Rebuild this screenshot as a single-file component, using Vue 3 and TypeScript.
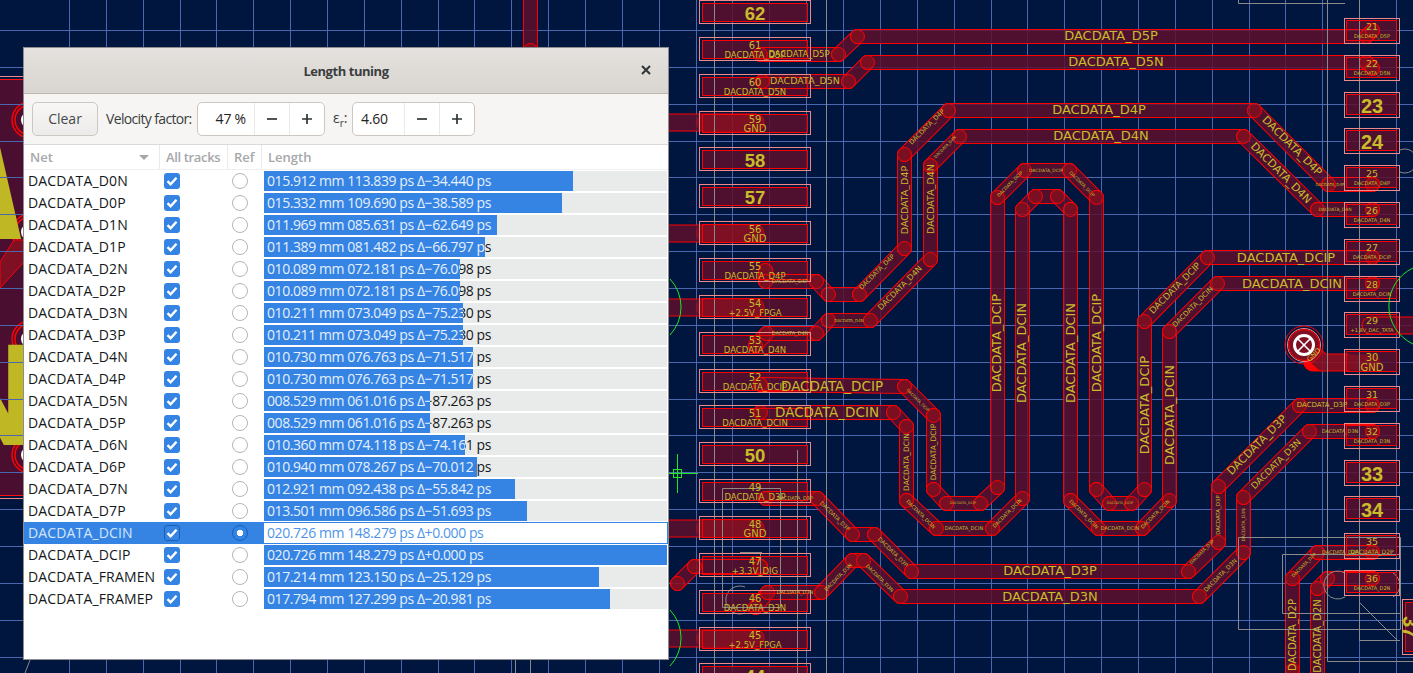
<script setup lang="ts">
type P = [number, number]
interface Label { t: string; x: number; y: number; s: number; r?: number; b?: boolean }

const rows = [
  ['DACDATA_D0N', '015.912', '113.839', '−34.440'],
  ['DACDATA_D0P', '015.332', '109.690', '−38.589'],
  ['DACDATA_D1N', '011.969', '085.631', '−62.649'],
  ['DACDATA_D1P', '011.389', '081.482', '−66.797'],
  ['DACDATA_D2N', '010.089', '072.181', '−76.098'],
  ['DACDATA_D2P', '010.089', '072.181', '−76.098'],
  ['DACDATA_D3N', '010.211', '073.049', '−75.230'],
  ['DACDATA_D3P', '010.211', '073.049', '−75.230'],
  ['DACDATA_D4N', '010.730', '076.763', '−71.517'],
  ['DACDATA_D4P', '010.730', '076.763', '−71.517'],
  ['DACDATA_D5N', '008.529', '061.016', '−87.263'],
  ['DACDATA_D5P', '008.529', '061.016', '−87.263'],
  ['DACDATA_D6N', '010.360', '074.118', '−74.161'],
  ['DACDATA_D6P', '010.940', '078.267', '−70.012'],
  ['DACDATA_D7N', '012.921', '092.438', '−55.842'],
  ['DACDATA_D7P', '013.501', '096.586', '−51.693'],
  ['DACDATA_DCIN', '020.726', '148.279', '+0.000'],
  ['DACDATA_DCIP', '020.726', '148.279', '+0.000'],
  ['DACDATA_FRAMEN', '017.214', '123.150', '−25.129'],
  ['DACDATA_FRAMEP', '017.794', '127.299', '−20.981'],
].map(([name, mm, ps, d]) => ({
  name,
  text: `${mm} mm ${ps} ps Δ${d} ps`,
  width: (parseFloat(ps) / 148.279) * 403,
  selected: name === 'DACDATA_DCIN',
}))

const gridX: number[] = []
for (let i = 0; i < 37; i++) gridX.push(Math.round(69 + i * 36.86) + 0.5)
const gridY: number[] = []
for (let i = 0; i < 19; i++) gridY.push(Math.round(30 + i * 36.86) + 0.5)

const paths: P[][] = [
  [[760, 54], [838, 54], [857, 36], [1366, 36], [1372, 30]],
  [[762, 81], [848, 81], [867, 62], [1366, 62], [1372, 68]],
  [[765, 270], [765, 281], [816, 281], [828, 294], [859, 294], [904, 248], [904, 154], [948, 110], [1254, 110], [1328, 184], [1372, 184]],
  [[755, 345], [766, 333], [816, 333], [828, 320], [870, 320], [930, 259], [930, 165], [959, 136], [1243, 136], [1317, 209], [1372, 209]],
  [[760, 384], [904, 386], [933, 415], [933, 489], [946, 503], [980, 503], [997, 487], [997, 197], [1024, 170], [1069, 170], [1096, 197], [1096, 489], [1109, 503], [1131, 503], [1144, 489], [1144, 321], [1207, 257], [1372, 257]],
  [[760, 412], [893, 412], [906, 426], [906, 500], [936, 528], [992, 528], [1022, 498], [1022, 209], [1035, 196], [1057, 196], [1070, 209], [1070, 500], [1098, 528], [1142, 528], [1169, 500], [1169, 331], [1217, 283], [1372, 283]],
  [[765, 498], [817, 498], [852, 534], [874, 534], [911, 571], [1188, 571], [1218, 542], [1218, 486], [1299, 405], [1372, 405]],
  [[755, 607], [767, 592], [821, 592], [852, 560], [863, 560], [900, 596], [1199, 596], [1243, 552], [1243, 497], [1309, 431], [1372, 431]],
  [[1292, 690], [1292, 670], [1292, 578], [1317, 552], [1372, 552]],
  [[1317, 690], [1317, 588], [1327, 578], [1372, 578]],
  [[677, 583], [694, 566], [760, 566]],
  [[530, -10], [530, 50]],
]

const segs = paths.flatMap((p) => p.slice(1).map((q, i) => [p[i], q] as [P, P]))
const vias = paths.flatMap((p) => p)

const power = [122, 233, 307, 528, 638]
const leftPads = Array.from({ length: 19 }, (_, i) => ({ n: 62 - i, y: Math.round(i * 36.86) }))
const rightPads = Array.from({ length: 16 }, (_, i) => ({ n: 21 + i, y: Math.round(18 + i * 36.8) }))

const leftBig = [62, 58, 57, 50, 44]
const rightBig = [23, 24, 33, 34]
const leftNets: Record<number, string> = {
  61: 'DACDATA_D5P', 60: 'DACDATA_D5N', 59: 'GND', 56: 'GND', 55: 'DACDATA_D4P', 54: '+2.5V_FPGA',
  53: 'DACDATA_D4N', 52: 'DACDATA_DCIP', 51: 'DACDATA_DCIN', 49: 'DACDATA_D3P', 48: 'GND',
  47: '+3.3V_DIG', 46: 'DACDATA_D3N', 45: '+2.5V_FPGA',
}
const rightNets: Record<number, string> = {
  21: 'DACDATA_D5P', 22: 'DACDATA_D5N', 25: 'DACDATA_D4P', 26: 'DACDATA_D4N', 27: 'DACDATA_DCIP',
  28: 'DACDATA_DCIN', 29: '+1.8V_DAC_TATA', 31: 'DACDATA_D3P', 32: 'DACDATA_D3N', 35: 'DACDATA_D2P', 36: 'DACDATA_D2N',
}

const labels: Label[] = []
const bigs: Label[] = []
leftPads.forEach(({ n, y }) => {
  if (leftBig.includes(n)) bigs.push({ t: String(n), x: 755, y: y + 13, s: 18.5 })
  else {
    labels.push({ t: String(n), x: 755, y: y + 8, s: 10 })
    labels.push({ t: leftNets[n] ?? '', x: 755, y: y + 17.5, s: leftNets[n]?.length < 8 ? 10 : 8.5 })
  }
})
rightPads.forEach(({ n, y }) => {
  if (rightBig.includes(n)) bigs.push({ t: String(n), x: 1372, y: y + 13.5, s: 20 })
  else if (n === 30) {
    labels.push({ t: '30', x: 1372, y: y + 8, s: 10 })
    labels.push({ t: 'GND', x: 1372, y: y + 18, s: 10 })
  } else {
    labels.push({ t: String(n), x: 1372, y: y + 8, s: 9.5 })
    labels.push({ t: rightNets[n] ?? '', x: 1372, y: y + 18, s: n === 35 ? 6 : 5 })
  }
})
const L = (t: string, x: number, y: number, s: number, r = 0): Label => ({ t: 'DACDATA_' + t, x, y, s, r })
labels.push(
  L('D5P', 1111, 35.5, 13), L('D5N', 1116, 61.5, 13), L('D4P', 1099, 109.5, 13), L('D4N', 1101, 135.5, 13),
  L('D5P', 799, 54, 8.5), L('D5N', 805, 80, 9.5),
  L('D4P', 1292, 146, 11, 45), L('D4N', 1281, 173, 11, 45),
  L('D4P', 904, 200, 9.5, -90), L('D4N', 930, 199, 9.5, -90),
  L('D4P', 927, 127, 6.5, -45), L('D4N', 945, 147, 4, -45),
  L('D4P', 877, 272, 6.5, -45), L('D4N', 900, 288, 8, -45),
  L('D4P', 790, 281, 5), L('D4N', 849, 320, 4), L('D4N', 790, 333, 5),
  L('DCIP', 832, 386, 13.5), L('DCIN', 827, 412, 13.5),
  L('DCIP', 996.5, 343, 13, -90), L('DCIN', 1021.5, 353, 13, -90), L('DCIN', 1070, 353, 13, -90), L('DCIP', 1096, 343, 13, -90),
  L('DCIP', 1144, 405, 13, -90), L('DCIN', 1169, 415, 13, -90),
  L('DCIN', 906, 462, 7.5, -90), L('DCIP', 933, 452, 7.5, -90),
  L('DCIP', 918, 400, 4, 45), L('DCIP', 1286, 257, 13), L('DCIN', 1292, 283, 13),
  L('DCIP', 1175, 288, 9, -45), L('DCIN', 1193, 307, 7, -45),
  L('D3P', 1050, 570.5, 13), L('D3N', 1050, 596.5, 13), L('D3P', 1257, 445, 11, -45), L('D3N', 1276, 464, 9, -45),
  L('D3P', 1218, 515, 5.5, -90), L('D3N', 1243, 525, 4.5, -90),
  L('D3P', 1202, 552, 4.5, -45), L('D3N', 1220, 575, 6, -45),
  L('D3P', 1322, 405, 7), L('D3N', 1340, 431, 5),
  L('D2P', 1292, 635, 10, -90), L('D2N', 1317, 636, 10, -90),
  L('D2P', 1340, 552, 5), L('D2P', 1304, 565, 4.5, -45),
  L('D3P', 835, 516, 5.5, 45), L('D3P', 893, 552, 5.5, 45), L('D3N', 880, 578, 5, 45), L('D3N', 838, 577, 5, -45),
  L('D3P', 795, 498, 5), L('D3N', 795, 592, 5),
  L('DCIN', 964, 528, 5), L('DCIP', 963, 503, 3.5), L('DCIN', 1120, 528, 5), L('DCIP', 1120, 503, 3.5),
  L('DCIN', 921, 514, 5, 45), L('DCIN', 1007, 513, 5, -45), L('DCIN', 1084, 514, 5, 45), L('DCIN', 1155, 514, 5, -45),
  L('DCIP', 1046, 170, 4.5), L('DCIP', 1010, 184, 4.5, -45), L('DCIP', 1082, 184, 4.5, 45),
  L('D4P', 1330, 184, 4), L('D4N', 1335, 209, 4.5),
  { t: 'GND', x: 1314, y: 355, s: 7, r: -45 },
)
</script>

<template>
  <div class="desk">
    <svg class="pcb" width="1413" height="673" viewBox="0 0 1413 673">
      <rect class="zone" x="-3" y="79" width="40" height="416" />
      <line class="zone-pink" x1="0" y1="76.5" x2="30" y2="76.5" />
      <line class="zone-edge" x1="0" y1="79.5" x2="30" y2="79.5" />
      <line class="zone-edge" x1="0" y1="495.5" x2="30" y2="495.5" />
      <line class="zone-pink" x1="0" y1="498.5" x2="30" y2="498.5" />
      <g v-for="v in [120, 232, 339, 455]" :key="v">
        <circle class="via-ring" cx="30" :cy="v" r="18" />
        <circle class="via-ring" cx="30" :cy="v" r="15" />
        <circle class="via-hole" cx="30" :cy="v" r="9" />
      </g>
      <text class="huge" font-size="300" text-anchor="end" transform="translate(22 239) scale(0.62 1)">A</text>
      <text class="huge" x="-70" y="445" font-size="138">N</text>
      <polygon class="zone-trace" points="0,262 14,240 24,240 24,262 0,288" />

      <line v-for="x in gridX" :key="'gx' + x" class="grid" :x1="x" y1="0" :x2="x" y2="673" />
      <line v-for="y in gridY" :key="'gy' + y" class="grid" x1="0" :y1="y" x2="1413" :y2="y" />

      <g v-for="p in leftPads" :key="'lp' + p.n">
        <rect class="pad-fill" x="702" :y="p.y + 3" width="106" height="19" />
      </g>
      <g v-for="p in rightPads" :key="'rp' + p.n">
        <rect class="pad-fill" x="1346" :y="p.y + 2" width="51" height="21" />
      </g>
      <rect class="pad-fill" x="1405" y="602" width="10" height="50" />

      <g class="snap">
        <g v-for="y in power" :key="'pw' + y">
          <line class="trace-edge thick" x1="660" :y1="y" x2="755" :y2="y" />
          <line class="trace-body thick-in" x1="660" :y1="y" x2="755" :y2="y" />
          <line class="trace-hot thick-in" x1="703" :y1="y" x2="755" :y2="y" />
        </g>
        <line class="trace-edge" x1="702" y1="566" x2="760" y2="566" />
        <line class="trace-edge thick" x1="1312" y1="362" x2="1345" y2="362" />
        <line class="trace-edge thick" x1="1304" y1="345" x2="1322" y2="362" />
        <line class="trace-hot thick-in" x1="1304" y1="345" x2="1322" y2="362" />
        <line class="trace-hot thick-in" x1="1322" y1="362" x2="1372" y2="362" />
        <line class="trace-edge thick" x1="1370" y1="325" x2="1420" y2="325" />
        <line class="trace-body thick-in" x1="1370" y1="325" x2="1420" y2="325" />

        <g v-for="(s, i) in segs" :key="'e' + i">
          <line class="trace-edge" :x1="s[0][0]" :y1="s[0][1]" :x2="s[1][0]" :y2="s[1][1]" />
          <line class="trace-body" :x1="s[0][0]" :y1="s[0][1]" :x2="s[1][0]" :y2="s[1][1]" />
        </g>
        <circle v-for="(v, i) in vias" :key="'v' + i" class="joint" :cx="v[0]" :cy="v[1]" r="7" />
      </g>

      <line v-for="x in gridX" :key="'ox' + x" class="grid-over" :x1="x" y1="0" :x2="x" y2="673" />
      <line v-for="y in gridY" :key="'oy' + y" class="grid-over" x1="0" :y1="y" x2="1413" :y2="y" />

      <g class="outline">
        <path d="M714.5 0V673M826.5 0V673M797.5 450V673M1327.5 0V661.5H1413M1359.5 0V640.5H1400M1359.5 602.5L1397 640" />
        <path d="M1238.5 3.5H1345M1238.5 0V3.5M1238.5 537.5H1400.5V629.5H1238.5ZM1282.5 554.5H1400.5V613.5H1282.5Z" />
        <path d="M722.5 488.5H780.5V607.5H722.5ZM740 552.5H762M760.5 552V577M530.5 660V673M515.5 660V673M30 660L25 673" />
        <path d="M1400 150a12 12 0 1 1 0 22" />
        <path d="M1345 573a14 14 0 1 0 0 24M1393 573a14 14 0 0 1 0 24" />
        <path d="M745 587a14 14 0 1 0 0 26" />
      </g>

      <g v-for="p in leftPads" :key="'lo' + p.n">
        <rect class="pad-outer" x="699.5" :y="p.y + 0.5" width="111" height="23" />
        <rect class="pad-inner" x="702.5" :y="p.y + 3.5" width="105" height="18" />
      </g>
      <g v-for="p in rightPads" :key="'ro' + p.n">
        <rect class="pad-outer" x="1344.5" :y="p.y + 0.5" width="55" height="25" />
        <rect class="pad-inner" x="1346.5" :y="p.y + 2.5" width="50" height="20" />
      </g>
      <rect class="pad-outer" x="1402.5" y="599.5" width="20" height="55" />
      <rect class="pad-inner" x="1405.5" y="602.5" width="20" height="49" />
      <text class="pcb-big" x="1410" y="627" font-size="20" transform="rotate(90 1410 627)">37</text>

      <circle class="drill-ring" cx="1304" cy="345" r="19" />
      <circle class="drill-pink" cx="1304" cy="345" r="16.5" />
      <circle class="drill-fill" cx="1304" cy="345" r="15.5" />
      <circle class="drill-white" cx="1304" cy="345" r="9.5" />
      <path class="drill-cross" d="M1297 352L1311 338M1297 338L1311 352" />

      <path class="green" d="M670 279A41 41 0 0 1 670 335M670 610A41 41 0 0 1 670 666M1413 268A42 42 0 0 0 1413 344" />
      <path class="green" d="M677.5 454V493M664 473.5H698" />
      <rect class="green" x="673.5" y="469.5" width="8" height="8" />

      <text
        v-for="(l, i) in labels"
        :key="'t' + i"
        class="pcb-text"
        :x="l.x"
        :y="l.y"
        :font-size="l.s"
        :transform="l.r ? `rotate(${l.r} ${l.x} ${l.y})` : undefined"
      >{{ l.t }}</text>
      <text v-for="b in bigs" :key="'b' + b.t" class="pcb-big" :x="b.x" :y="b.y" :font-size="b.s">{{ b.t }}</text>
    </svg>

    <section class="dialog">
      <header class="titlebar">
        <h1 class="title">Length tuning</h1>
        <svg class="close" width="12" height="12" viewBox="0 0 12 12">
          <path d="M2 2L10 10M10 2L2 10" />
        </svg>
      </header>

      <div class="toolbar">
        <button class="clear">Clear</button>
        <span class="tool-label velocity">Velocity factor:</span>
        <div class="spin spin-a">
          <span class="spin-value right">47 %</span>
          <span class="spin-btn"><svg width="14" height="14" viewBox="0 0 14 14"><path d="M2 7H12" /></svg></span>
          <span class="spin-btn"><svg width="14" height="14" viewBox="0 0 14 14"><path d="M2 7H12M7 2V12" /></svg></span>
        </div>
        <span class="tool-label eps">ε<sub>r</sub>:</span>
        <div class="spin spin-b">
          <span class="spin-value">4.60</span>
          <span class="spin-btn"><svg width="14" height="14" viewBox="0 0 14 14"><path d="M2 7H12" /></svg></span>
          <span class="spin-btn"><svg width="14" height="14" viewBox="0 0 14 14"><path d="M2 7H12M7 2V12" /></svg></span>
        </div>
      </div>

      <div class="table">
        <div class="head">
          <div class="hcell net-head">Net<i class="sort" /></div>
          <div class="hcell tight">All tracks</div>
          <div class="hcell">Ref</div>
          <div class="hcell last">Length</div>
        </div>
        <div v-for="r in rows" :key="r.name" class="row" :class="{ selected: r.selected }">
          <div class="name">{{ r.name }}</div>
          <div class="mid">
            <span class="check">
              <svg width="12" height="12" viewBox="0 0 12 12"><path d="M1.5 6.2L4.6 9.2L10.5 2.8" /></svg>
            </span>
          </div>
          <div class="mid"><span class="radio" /></div>
          <div class="bar">
            <span class="bar-text">{{ r.text }}</span>
            <span class="fill" :style="{ width: r.width + 'px' }"><span class="bar-text">{{ r.text }}</span></span>
          </div>
        </div>
      </div>
    </section>
  </div>
</template>

<style scoped>
.desk {
  position: relative;
  width: 1413px;
  height: 673px;
  overflow: hidden;
  background: #00163f;
  font-family: "Open Sans", "Noto Sans", sans-serif;
}
.pcb { position: absolute; inset: 0; display: block; }
.snap { transform: translate(0.5px, 0.5px); }
.zone { fill: #4a0f30; }
.zone-edge { stroke: #ff1010; stroke-width: 1; }
.zone-pink { stroke: #f08888; stroke-width: 1; }
.zone-trace { fill: #7f0f22; stroke: #ff0000; stroke-width: 1; }
.via-ring { fill: none; stroke: #ff0000; stroke-width: 1.5; }
.via-hole { fill: #fff; }
.huge { fill: #c0b724; font-family: "DejaVu Sans", sans-serif; font-weight: 700; }
.grid { stroke: #3f66ad; stroke-width: 1; }
.grid-over { stroke: #a070c0; stroke-width: 1; opacity: 0.12; }
.pad-fill { fill: #4f1030; }
.pad-outer { fill: none; stroke: #f08888; stroke-width: 1; }
.pad-inner { fill: none; stroke: #ff0000; stroke-width: 1; }
.trace-edge { stroke: #ff0000; stroke-width: 15; stroke-linecap: round; }
.trace-body { stroke: #4f1030; stroke-width: 13; stroke-linecap: round; }
.thick { stroke-width: 18; }
.thick-in { stroke-width: 16; }
.trace-hot { stroke: #7f0f22; stroke-linecap: round; }
.joint { fill: #7a0f22; stroke: #ff0000; stroke-width: 1; }
.outline { fill: none; stroke: #8a8a8a; stroke-width: 1; }
.outline path { fill: none; }
.drill-ring { fill: none; stroke: #ff0000; stroke-width: 1; }
.drill-pink { fill: none; stroke: #f08888; stroke-width: 1; }
.drill-fill { fill: #7f0f22; stroke: #ff0000; stroke-width: 1; }
.drill-white { fill: #7f0f22; stroke: #fff; stroke-width: 3; }
.drill-cross { stroke: #fff; stroke-width: 1.6; fill: none; }
.green { fill: none; stroke: #22e422; stroke-width: 1; }
.pcb-text {
  fill: #c8bc2a;
  font-family: "DejaVu Sans", sans-serif;
  text-anchor: middle;
  dominant-baseline: central;
}
.pcb-big {
  fill: #c8bc2a;
  font-family: "Liberation Sans", sans-serif;
  font-weight: 700;
  text-anchor: middle;
  dominant-baseline: central;
}

.dialog {
  position: absolute;
  left: 23px;
  top: 47px;
  width: 646px;
  height: 613px;
  box-sizing: border-box;
  border: 1px solid #8d8d8d;
  background: #fff;
  display: flex;
  flex-direction: column;
  color: #2e3436;
}
.titlebar {
  height: 46px;
  flex: none;
  box-sizing: border-box;
  border-bottom: 1px solid #bfb8b1;
  background: linear-gradient(#e4e1de, #d9d6d1);
  display: flex;
  align-items: center;
  justify-content: center;
  position: relative;
}
.title { margin: 0; font-size: 13px; font-weight: 700; color: #3b3d3f; letter-spacing: -0.45px; }
.close { position: absolute; right: 16px; top: 16px; }
.close path { stroke: #2e3436; stroke-width: 2; fill: none; }
.toolbar {
  height: 51px;
  flex: none;
  box-sizing: border-box;
  background: #f6f5f4;
  border-bottom: 1px solid #dcd9d6;
  display: flex;
  align-items: center;
  padding: 0 0 1px 8px;
  font-size: 14px;
}
.clear {
  width: 66px;
  height: 34px;
  box-sizing: border-box;
  border: 1px solid #cdc7c2;
  border-radius: 5px;
  background: linear-gradient(#f8f7f6, #ecebe9);
  color: #45494b;
  font: inherit;
  padding: 0;
}
.tool-label { margin-left: 8px; color: #3a3e40; white-space: nowrap; }
.velocity { width: 86px; letter-spacing: -0.65px; }
.eps { margin-left: 8px; width: 19px; margin-right: 0; }
.eps sub { font-size: 10px; }
.spin {
  height: 34px;
  box-sizing: border-box;
  margin-left: 5px;
  border: 1px solid #cdc7c2;
  border-radius: 5px;
  background: #fff;
  display: flex;
  align-items: stretch;
}
.spin-a { width: 128px; }
.spin-b { width: 123px; margin-left: 0; }
.spin-value { flex: 1; align-self: center; padding: 0 8px; color: #1f2325; letter-spacing: -0.2px; }
.spin-value.right { text-align: right; }
.spin-btn {
  width: 35px;
  flex: none;
  box-sizing: border-box;
  border-left: 1px solid #ebe9e6;
  display: flex;
  align-items: center;
  justify-content: center;
}
.spin-btn path { stroke: #2e3436; stroke-width: 1.7; fill: none; }
.table { flex: 1; font-size: 14px; }
.head {
  height: 25px;
  box-sizing: border-box;
  display: grid;
  grid-template-columns: 136px 68px 34px 1fr;
  border-bottom: 1px solid #f1f0ee;
  font-size: 13px;
  font-weight: 600;
  color: #a5a8aa;
}
.hcell {
  display: flex;
  align-items: center;
  padding-left: 6px;
  box-sizing: border-box;
  border-right: 1px solid #ece9e6;
  white-space: nowrap;
}
.hcell.tight { letter-spacing: -0.35px; }
.hcell.last { border-right: 0; }
.net-head { position: relative; }
.sort {
  position: absolute;
  right: 10px;
  top: 10px;
  border: 5px solid transparent;
  border-top: 5px solid #a5a8aa;
  border-bottom: 0;
}
.row {
  height: 22px;
  display: grid;
  grid-template-columns: 136px 68px 34px 1fr;
  align-items: center;
  color: #14181a;
}
.name { padding-left: 4px; padding-bottom: 1px; white-space: nowrap; letter-spacing: 0.15px; }
.mid { display: flex; align-items: center; padding-left: 4px; }
.check {
  width: 16px;
  height: 16px;
  box-sizing: border-box;
  border-radius: 3px;
  background: #3584e4;
  display: flex;
  align-items: center;
  justify-content: center;
}
.check path { stroke: #fff; stroke-width: 2.4; fill: none; }
.radio {
  width: 16px;
  height: 16px;
  box-sizing: border-box;
  border-radius: 50%;
  border: 1px solid #bab5ae;
  background: #fff;
}
.bar {
  position: relative;
  margin: 1px 1px 1px 2px;
  height: 20px;
  background: #e9ebeb;
  line-height: 19px;
  white-space: nowrap;
}
.bar-text { position: absolute; left: 3px; top: 0; color: #14181a; letter-spacing: -0.42px; }
.fill {
  position: absolute;
  left: 0;
  top: 0;
  bottom: 0;
  overflow: hidden;
  background: #3584e4;
}
.fill .bar-text { color: #e6f0fc; }
.row.selected { background: #3584e4; color: #d6e6fb; }
.row.selected .check { border: 1px solid #1b5fb3; }
.row.selected .radio {
  border: 1px solid #1b5fb3;
  background: radial-gradient(circle, #fff 0 3px, #3584e4 3.5px);
}
.row.selected .bar { background: #fff; }
.row.selected .fill { background: #fff; }
.row.selected .bar-text { color: #4e95ea; }
</style>
